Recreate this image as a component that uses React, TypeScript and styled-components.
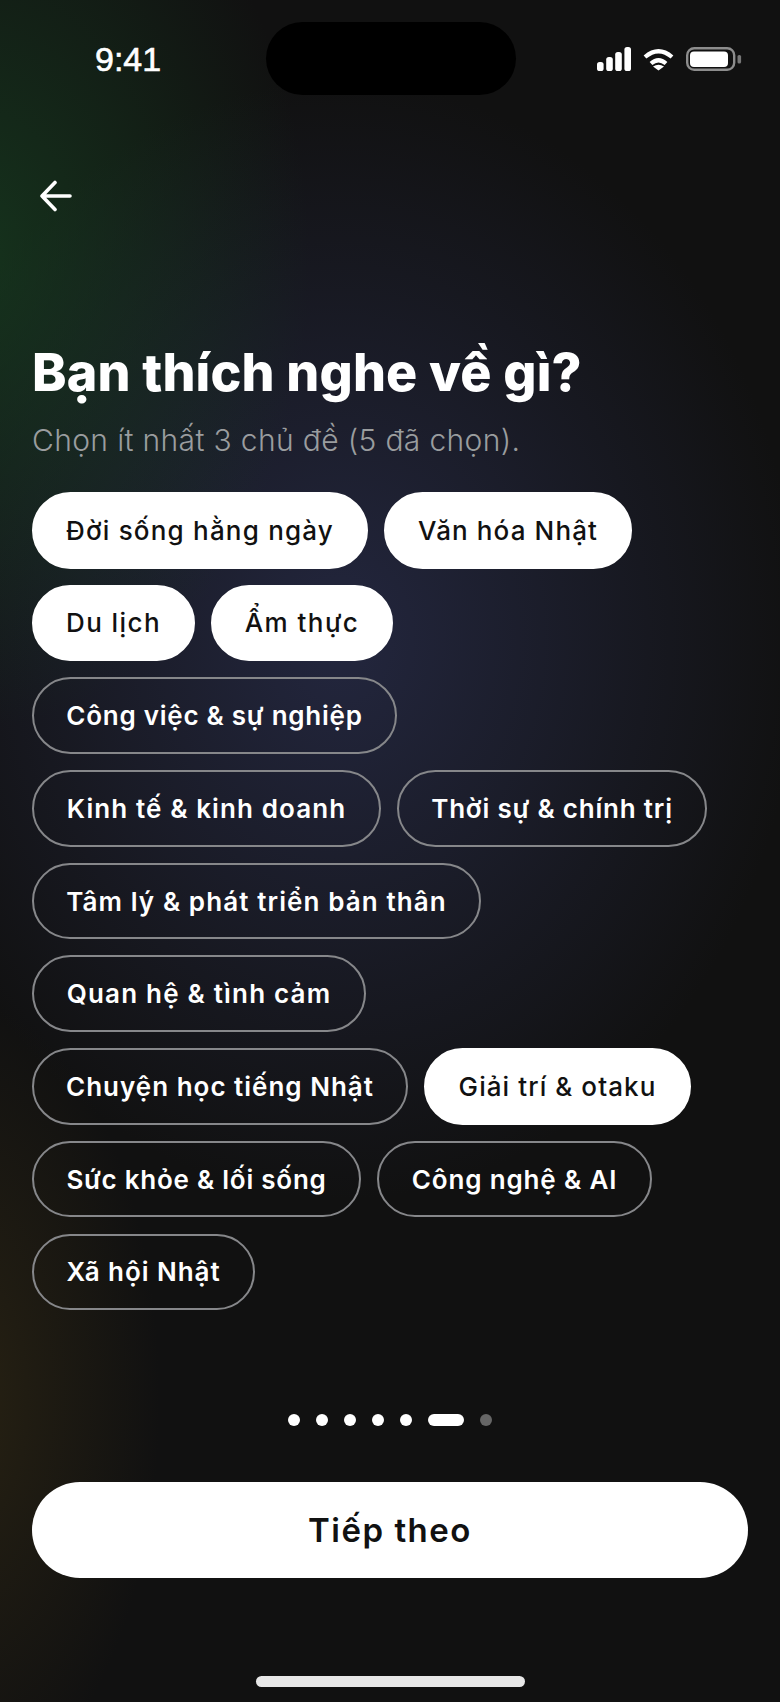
import React from 'react';
import styled, { createGlobalStyle } from 'styled-components';

const GlobalStyle = createGlobalStyle`
    html, body {
        margin: 0;
        padding: 0;
        background: #111111;
    }
`;

const Screen = styled.div`
    position: relative;
    width: 780px;
    height: 1702px;
    overflow: hidden;
    display: flex;
    flex-direction: column;
    color: white;
    font-family: Inter, "Noto Sans", sans-serif;
    background:
        radial-gradient(ellipse 340px 470px at -30px 260px, rgba(24, 72, 36, 0.62), rgba(24, 72, 36, 0) 100%),
        radial-gradient(ellipse 200px 400px at -40px 1400px, rgba(62, 50, 20, 0.5), rgba(62, 50, 20, 0) 100%),
        radial-gradient(ellipse 460px 560px at 340px 640px, rgba(38, 42, 70, 0.85), rgba(38, 42, 70, 0) 100%),
        #111111;
`;

const StatusBar = styled.div`
    height: 118px;
    flex: none;
    display: flex;
    align-items: center;
    justify-content: space-between;
    padding: 0 38px 0 95px;
    box-sizing: border-box;
`;

const Clock = styled.div`
    font-family: "Liberation Sans", Arial, sans-serif;
    font-size: 34px;
    font-weight: 400;
    -webkit-text-stroke: 0.6px white;
`;

const Island = styled.div`
    position: absolute;
    left: 266px;
    top: 22px;
    width: 250px;
    height: 73px;
    border-radius: 37px;
    background: #000;
`;

const StatusIcons = styled.div`
    display: flex;
    align-items: center;
    gap: 12px;
`;

const BackButton = styled.div`
    margin: 62px 0 0 38px;
    height: 32px;
    width: 34px;
`;

const Content = styled.div`
    padding: 0 32px;
    display: flex;
    flex-direction: column;
`;

const Title = styled.h1`
    margin: 129px 0 0;
    font-size: 52px;
    line-height: 64px;
    font-weight: 800;
    letter-spacing: 0.16px;
`;

const Subtitle = styled.p`
    margin: 16px 0 0;
    font-size: 30px;
    line-height: 38px;
    font-weight: 300;
    letter-spacing: 0.35px;
    color: #9a9d9f;
`;

const Chips = styled.div`
    margin-top: 33px;
    display: flex;
    flex-wrap: wrap;
    gap: 16.2px 16px;
`;

const Chip = styled.div<{ $selected?: boolean; $width: number; $tracking: number }>`
    box-sizing: border-box;
    height: 76.5px;
    width: ${(p) => p.$width}px;
    border-radius: 39px;
    display: flex;
    align-items: center;
    justify-content: center;
    font-size: 26px;
    font-weight: ${(p) => (p.$selected ? 500 : 600)};
    letter-spacing: ${(p) => p.$tracking}px;
    white-space: nowrap;
    background: ${(p) => (p.$selected ? '#ffffff' : 'transparent')};
    color: ${(p) => (p.$selected ? '#111111' : '#ffffff')};
    border: 2.5px solid ${(p) => (p.$selected ? '#ffffff' : '#86878a')};
`;

const Dots = styled.div`
    position: absolute;
    left: 0;
    right: 0;
    top: 1414px;
    display: flex;
    justify-content: center;
    gap: 16px;
    align-items: center;
`;

const Dot = styled.div<{ $active?: boolean; $dim?: boolean }>`
    width: ${(p) => (p.$active ? 36 : 12)}px;
    height: 12px;
    border-radius: 6px;
    background: ${(p) => (p.$dim ? '#666666' : '#ffffff')};
`;

const NextButton = styled.div`
    position: absolute;
    left: 32px;
    right: 32px;
    top: 1482px;
    height: 96px;
    border-radius: 48px;
    background: #fff;
    color: #111;
    display: flex;
    align-items: center;
    justify-content: center;
    font-size: 33px;
    font-weight: 600;
    letter-spacing: 1.5px;
`;

const HomeBar = styled.div`
    position: absolute;
    left: 256px;
    top: 1676px;
    width: 269px;
    height: 11px;
    border-radius: 6px;
    background: #e8e8e8;
`;

const topics = [
    { label: 'Đời sống hằng ngày', width: 336, tracking: 1.2, selected: true },
    { label: 'Văn hóa Nhật', width: 248, tracking: 1.12, selected: true },
    { label: 'Du lịch', width: 163, tracking: 1.4, selected: true },
    { label: 'Ẩm thực', width: 182, tracking: 1.45, selected: true },
    { label: 'Công việc & sự nghiệp', width: 365, tracking: 0.74 },
    { label: 'Kinh tế & kinh doanh', width: 349, tracking: 1.1 },
    { label: 'Thời sự & chính trị', width: 310, tracking: 0.8 },
    { label: 'Tâm lý & phát triển bản thân', width: 449, tracking: 1.1 },
    { label: 'Quan hệ & tình cảm', width: 334, tracking: 1.2 },
    { label: 'Chuyện học tiếng Nhật', width: 376, tracking: 1 },
    { label: 'Giải trí & otaku', width: 267, tracking: 1.08, selected: true },
    { label: 'Sức khỏe & lối sống', width: 329, tracking: 0.75 },
    { label: 'Công nghệ & AI', width: 275, tracking: 0.85 },
    { label: 'Xã hội Nhật', width: 223, tracking: 0.95 },
];

const SignalIcon = () => (
    <svg width="34" height="24" viewBox="0 0 34 24" fill="white">
        <rect x="0" y="15" width="6.6" height="9" rx="2.6" />
        <rect x="9.2" y="10" width="6.6" height="14" rx="2.6" />
        <rect x="18.2" y="5" width="6.6" height="19" rx="2.6" />
        <rect x="27.4" y="0" width="6.6" height="24" rx="2.6" />
    </svg>
);

const WifiIcon = () => (
    <svg width="31" height="23" viewBox="0 0 31 23" fill="none" stroke="white" strokeWidth="4.2">
        <path d="M2 9 Q15.5 -2.5 29 9" />
        <path d="M8 15.5 Q15.5 9 23 15.5" />
        <path d="M15.5 22.5 L10 18.5 Q15.5 15 21 18.5 Z" fill="white" stroke="none" />
    </svg>
);

const BatteryIcon = () => (
    <svg width="56" height="24" viewBox="0 0 56 24" fill="none">
        <rect x="1.2" y="1.2" width="47" height="21.6" rx="7" stroke="#8d8d8d" strokeWidth="2.4" />
        <rect x="4" y="4.5" width="38" height="15.5" rx="4" fill="white" />
        <rect x="51.5" y="8" width="3.6" height="8.5" rx="1.6" fill="#777" />
    </svg>
);

const BackArrow = () => (
    <svg width="34" height="32" viewBox="0 0 34 32" fill="none" stroke="white" strokeWidth="3.6" strokeLinecap="round" strokeLinejoin="round">
        <path d="M32 16 H4 M17 2.5 L4 16 L17 29.5" />
    </svg>
);

export default function App() {
    return (
        <Screen>
            <GlobalStyle />
            <StatusBar>
                <Clock>9:41</Clock>
                <Island />
                <StatusIcons>
                    <SignalIcon />
                    <WifiIcon />
                    <BatteryIcon />
                </StatusIcons>
            </StatusBar>
            <BackButton>
                <BackArrow />
            </BackButton>
            <Content>
                <Title>Bạn thích nghe về gì?</Title>
                <Subtitle>Chọn ít nhất 3 chủ đề (5 đã chọn).</Subtitle>
                <Chips>
                    {topics.map((topic) => (
                        <Chip key={topic.label} $selected={topic.selected} $width={topic.width} $tracking={topic.tracking}>
                            {topic.label}
                        </Chip>
                    ))}
                </Chips>
            </Content>
            <Dots>
                {[0, 1, 2, 3, 4].map((i) => (
                    <Dot key={i} />
                ))}
                <Dot $active />
                <Dot $dim />
            </Dots>
            <NextButton>Tiếp theo</NextButton>
            <HomeBar />
        </Screen>
    );
}
